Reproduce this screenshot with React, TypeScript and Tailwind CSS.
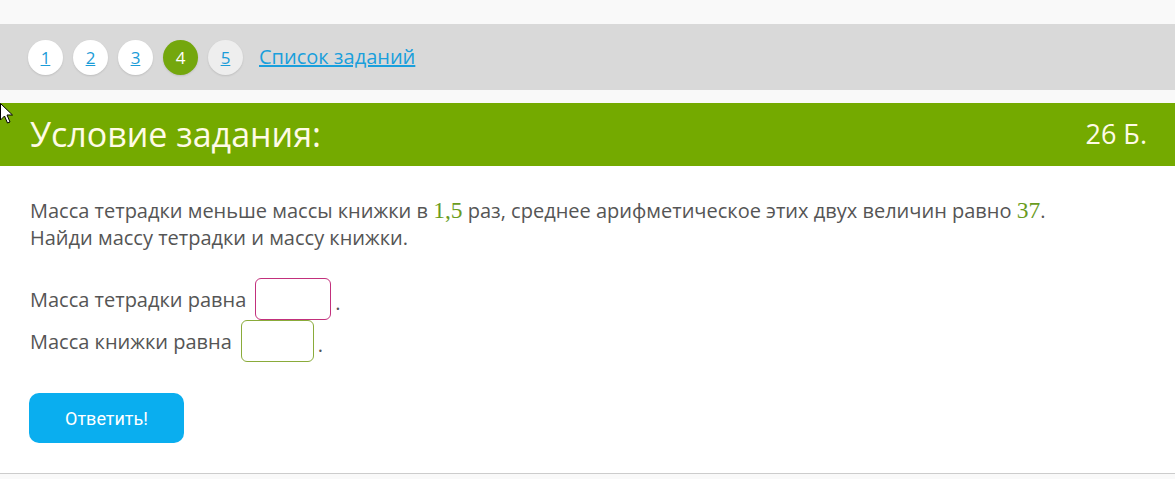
import React from 'react';

const pages = ['1', '2', '3', '4', '5'];

function Cursor() {
  return (
    <svg width="14" height="22" viewBox="0 0 14 22" className="absolute left-0 top-[103px]">
      <path d="M0.5 0.5 L0.5 17 L4.5 13 L7.5 20 L10 19 L7 12 L12.5 12 Z" fill="#fff" stroke="#000" strokeWidth="1" />
    </svg>
  );
}

const mathFont = { fontFamily: '"Liberation Serif", "DejaVu Serif", serif' };

export default function App() {
  return (
    <div className="relative w-[1175px] h-[479px] bg-white overflow-hidden" style={{ fontFamily: '"Open Sans", sans-serif' }}>
      <div className="h-[24px] bg-[#f9f9f9]" />

      {/* task navigation */}
      <div className="h-[66px] bg-[#d9d9d9] flex items-center pl-[28px] gap-[10px] pt-[1px]">
        {pages.map((p) => (
          <div
            key={p}
            className={`w-[35px] h-[35px] rounded-full flex items-center justify-center text-[17px] shadow-[0_1px_2px_rgba(0,0,0,0.12)] ${
              p === '4' ? 'bg-[#74a70d] text-white' : p === '5' ? 'bg-[#eeeeee] text-[#1a9cd8] underline' : 'bg-white text-[#1a9cd8] underline'
            }`}
          >
            {p}
          </div>
        ))}
        <a className="ml-[6px] text-[20px] text-[#1a9fdc] underline leading-none pb-[2px]">Список заданий</a>
      </div>

      <div className="h-[13px] bg-[#f9f9f9]" />

      {/* header */}
      <div className="h-[63px] bg-[#74aa00] flex items-center justify-between pl-[30px] pr-[28px] text-[#fffbe6]">
        <span className="text-[34px] leading-none pb-[2px]">Условие задания:</span>
        <span className="text-[27px] leading-none pb-[2px]">26 Б.</span>
      </div>

      <div className="pl-[30px] pt-[31px] text-[20px] leading-[27px] text-[#555555]">
        <p>
          Масса тетрадки меньше массы книжки в{' '}
          <span className="text-[23.5px] text-[#6a9c1e]" style={mathFont}>1,5</span>{' '}
          раз, среднее арифметическое этих двух величин равно{' '}
          <span className="text-[23.5px] text-[#6a9c1e]" style={mathFont}>37</span>.
        </p>
        <p>Найди массу тетрадки и массу книжки.</p>

        <div className="mt-[27px] flex flex-col">
          <div className="flex items-center">
            <span>Масса тетрадки равна</span>
            <input className="ml-[9px] w-[76px] h-[42px] rounded-[6px] border border-[#c2307c] bg-white outline-none" />
            <span className="ml-[4px] mt-[6px]">.</span>
          </div>
          <div className="flex items-center">
            <span>Масса книжки равна</span>
            <input className="ml-[9px] w-[73px] h-[42px] rounded-[6px] border border-[#8aab3a] bg-white outline-none" />
            <span className="ml-[4px] mt-[6px]">.</span>
          </div>
        </div>

        <button
          className="mt-[31px] -ml-[1px] w-[155px] h-[50px] rounded-[10px] bg-[#0aaeef] text-white text-[18px]"
          style={{ fontFamily: 'Roboto, "Liberation Sans", sans-serif' }}
        >
          Ответить!
        </button>
      </div>

      <div className="absolute left-0 right-0 top-[473px] h-[6px] border-t border-[#cccccc] bg-[#f9f9f9]" />
      <Cursor />
    </div>
  );
}
